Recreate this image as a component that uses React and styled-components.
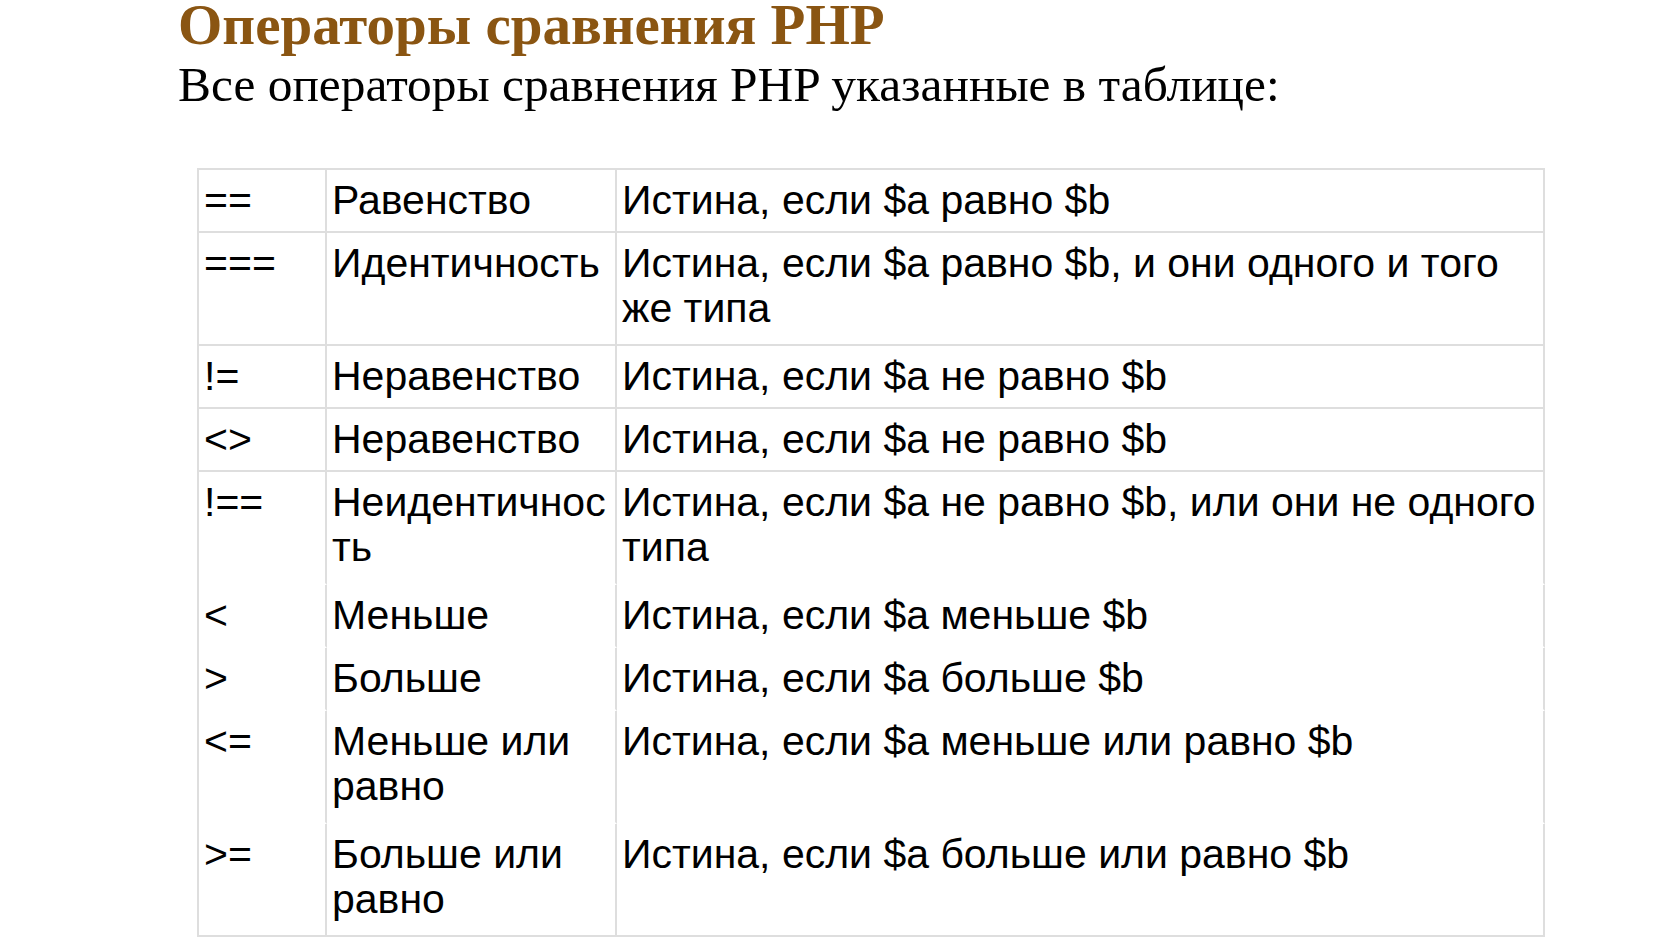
import React from "react";
import styled, { createGlobalStyle } from "styled-components";

const GlobalStyle = createGlobalStyle`
  html, body {
    margin: 0;
    padding: 0;
    background: #ffffff;
  }
`;

const Slide = styled.main`
  width: 1680px;
  height: 945px;
  overflow: hidden;
  padding-left: 178px;
  box-sizing: border-box;
  display: flex;
  flex-direction: column;
`;

const Title = styled.h1`
  margin: 0;
  font-family: "Liberation Serif", serif;
  font-weight: bold;
  font-size: 57px;
  line-height: 50px;
  color: #8a5512;
`;

const Subtitle = styled.p`
  margin: 8px 0 0;
  font-family: "Liberation Serif", serif;
  font-size: 49.4px;
  line-height: 54px;
  color: #000;
`;

const Table = styled.table`
  margin: 56px 0 0 19px;
  width: 1348px;
  border-collapse: separate;
  border-spacing: 0;
  border-top: 2px solid #dedede;
  border-left: 2px solid #dedede;
  table-layout: fixed;
  font-family: "Liberation Sans", Arial, sans-serif;
  font-size: 41px;
  line-height: 45px;
  color: #000;
`;

const Cell = styled.td`
  vertical-align: top;
  padding: 8px 4px ${({ $tall }) => ($tall ? "13px" : "8px")} 5px;
  border-right: 2px solid #dedede;
  border-bottom: 2px solid ${({ $ruled }) => ($ruled ? "#dedede" : "transparent")};
  overflow-wrap: anywhere;
`;

const LastRowCell = styled(Cell)`
  border-bottom-color: #dedede;
`;

const rows = [
  { op: "==", name: "Равенство", desc: "Истина, если $a равно $b", ruled: true },
  { op: "===", name: "Идентичность", desc: "Истина, если $a равно $b, и они одного и того же типа", ruled: true, tall: true },
  { op: "!=", name: "Неравенство", desc: "Истина, если $a не равно $b", ruled: true },
  { op: "<>", name: "Неравенство", desc: "Истина, если $a не равно $b", ruled: true },
  { op: "!==", name: "Неидентичность", desc: "Истина, если $a не равно $b, или они не одного типа", tall: true },
  { op: "<", name: "Меньше", desc: "Истина, если $a меньше $b" },
  { op: ">", name: "Больше", desc: "Истина, если $a больше $b" },
  { op: "<=", name: "Меньше или равно", desc: "Истина, если $a меньше или равно $b", tall: true },
  { op: ">=", name: "Больше или равно", desc: "Истина, если $a больше или равно $b", tall: true, last: true },
];

export default function App() {
  return (
    <>
      <GlobalStyle />
      <Slide>
        <Title>Операторы сравнения PHP</Title>
        <Subtitle>Все операторы сравнения PHP указанные в таблице:</Subtitle>
        <Table>
          <colgroup>
            <col style={{ width: 128 }} />
            <col style={{ width: 290 }} />
            <col />
          </colgroup>
          <tbody>
            {rows.map((row, i) => {
              const C = row.last ? LastRowCell : Cell;
              return (
                <tr key={i}>
                  <C $ruled={row.ruled} $tall={row.tall}>{row.op}</C>
                  <C $ruled={row.ruled} $tall={row.tall}>{row.name}</C>
                  <C $ruled={row.ruled} $tall={row.tall}>{row.desc}</C>
                </tr>
              );
            })}
          </tbody>
        </Table>
      </Slide>
    </>
  );
}
